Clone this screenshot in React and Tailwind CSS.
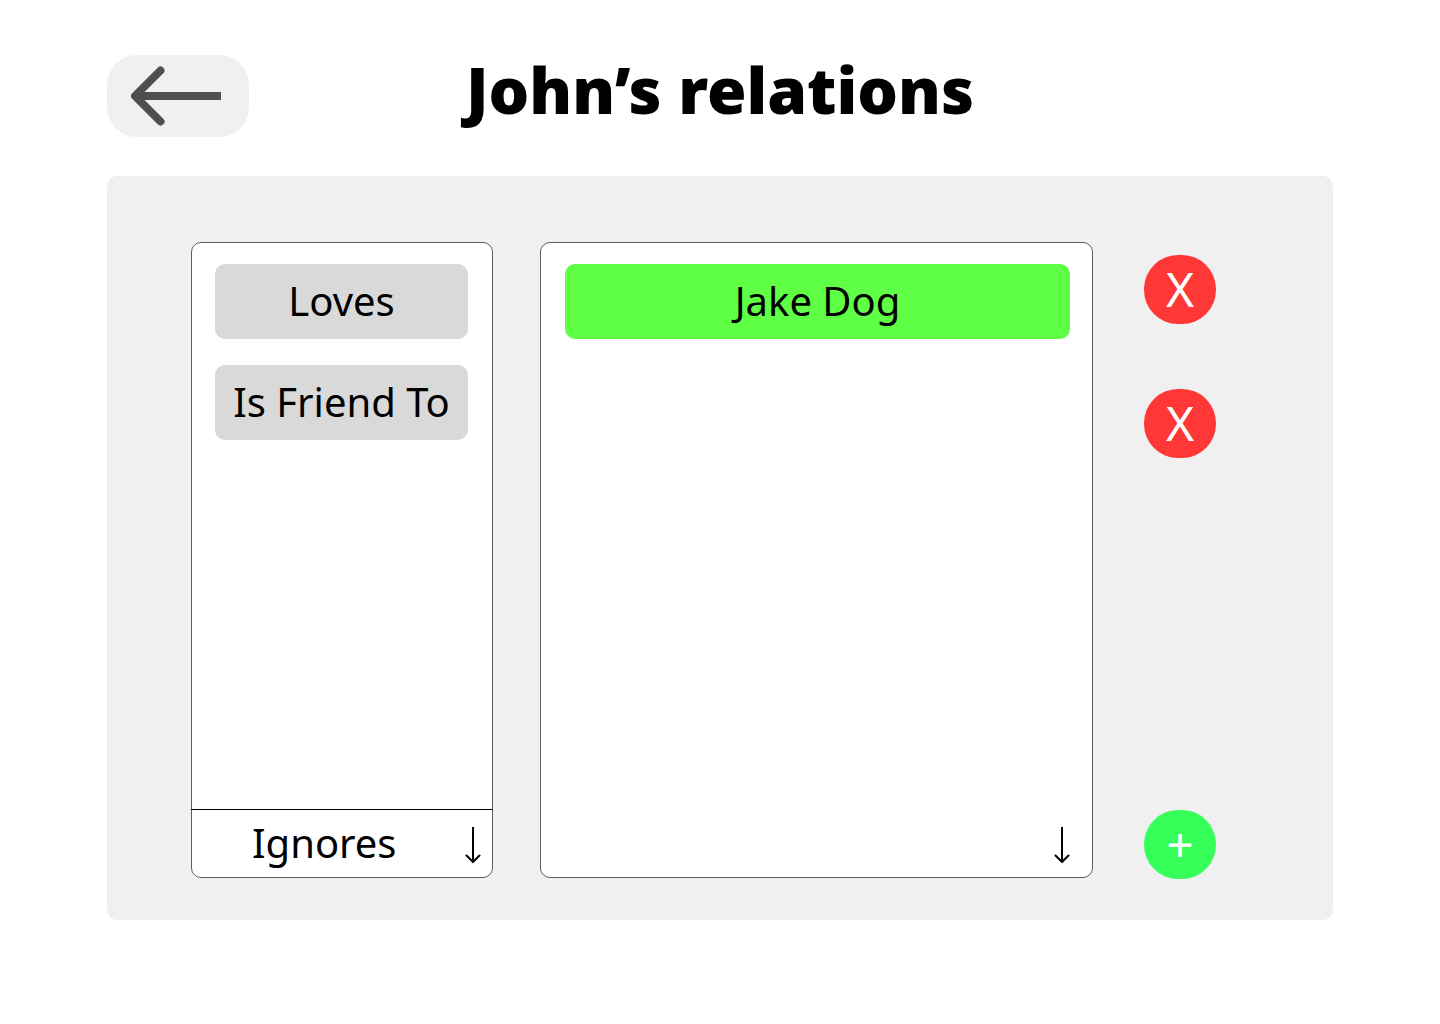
import React from "react";

function BackArrow() {
  return (
    <svg width="90" height="60" viewBox="0 0 90 60" fill="none" stroke="#4f4f4f" strokeWidth="8" aria-hidden="true">
      <path d="M4 30H90" />
      <path d="M29.500 4.500L4 30L29.500 55.500" strokeLinecap="round" strokeLinejoin="round" />
    </svg>
  );
}

function DownArrow({ className }) {
  return (
    <svg
      className={`pointer-events-none absolute bottom-3.5 ${className}`}
      width="16"
      height="36"
      viewBox="0 0 16 36"
      fill="none"
      stroke="#000"
      strokeWidth="2"
      aria-hidden="true"
    >
      <path d="M8 0V35" />
      <path d="M1.500 28.500L8 35L14.500 28.500" strokeLinecap="round" strokeLinejoin="round" />
    </svg>
  );
}

function Picker({ label, options, className, arrowClassName }) {
  return (
    <div className={`relative -mx-px mt-auto border-t ${className}`}>
      <select
        aria-label={label}
        className="block h-[67px] w-full appearance-none bg-transparent pr-10 pb-0.5 pl-[61px] text-[40px] leading-[54px] outline-none"
      >
        {options.map((option) => (
          <option key={option}>{option}</option>
        ))}
      </select>
      <DownArrow className={arrowClassName} />
    </div>
  );
}

function RoundButton({ label, className, children }) {
  return (
    <button
      type="button"
      aria-label={label}
      className={`flex h-[69px] w-[72px] items-center justify-center rounded-[34px] pb-0.5 text-5xl leading-none text-white ${className}`}
    >
      {children}
    </button>
  );
}

export default function App() {
  return (
    <main className="min-h-screen bg-white px-[107px] py-[55px] font-['Noto_Sans',sans-serif] text-black">
      <header className="grid grid-cols-[142px_1fr_142px] items-start">
        <button
          type="button"
          aria-label="Back"
          className="flex h-[82px] items-center rounded-[30px] bg-[#f0f0f0] pl-6"
        >
          <BackArrow />
        </button>
        <h1 className="text-center text-[64px] leading-[70px] font-black">John’s relations</h1>
      </header>

      <section className="mt-[39px] flex min-h-[744px] rounded-[10px] bg-[#f0f0f0] pt-[66px] pr-[117px] pb-[42px] pl-[84px]">
        <div className="flex w-[302px] flex-col rounded-[10px] border border-[#5e5e5e] bg-white pt-[21px]">
          <div className="flex flex-col gap-[26px] pr-6 pl-[23px]">
            {["Loves", "Is Friend To"].map((name) => (
              <button
                key={name}
                type="button"
                className="h-[75px] rounded-[10px] bg-[#d9d9d9] pb-0.5 text-[40px] leading-[54px] whitespace-nowrap"
              >
                {name}
              </button>
            ))}
          </div>
          <Picker label="Relation" options={["Ignores"]} className="border-black" arrowClassName="right-3" />
        </div>

        <div className="ml-[47px] flex flex-1 flex-col rounded-[10px] border border-[#5e5e5e] bg-white pt-[21px]">
          <div className="flex flex-col pr-[22px] pl-6">
            <button type="button" className="h-[75px] rounded-[10px] bg-[#5fff45] pb-0.5 text-[40px] leading-[54px]">
              Jake Dog
            </button>
          </div>
          <Picker label="Person" options={[""]} className="border-transparent" arrowClassName="right-[23px]" />
        </div>

        <div className="-mb-px ml-[51px] flex flex-col pt-[13px]">
          <div className="flex flex-col gap-[65px]">
            <RoundButton label="Remove Loves" className="bg-[#ff3737]">X</RoundButton>
            <RoundButton label="Remove Is Friend To" className="bg-[#ff3737]">X</RoundButton>
          </div>
          <RoundButton label="Add relation" className="mt-auto bg-[#37ff59]">+</RoundButton>
        </div>
      </section>
    </main>
  );
}
